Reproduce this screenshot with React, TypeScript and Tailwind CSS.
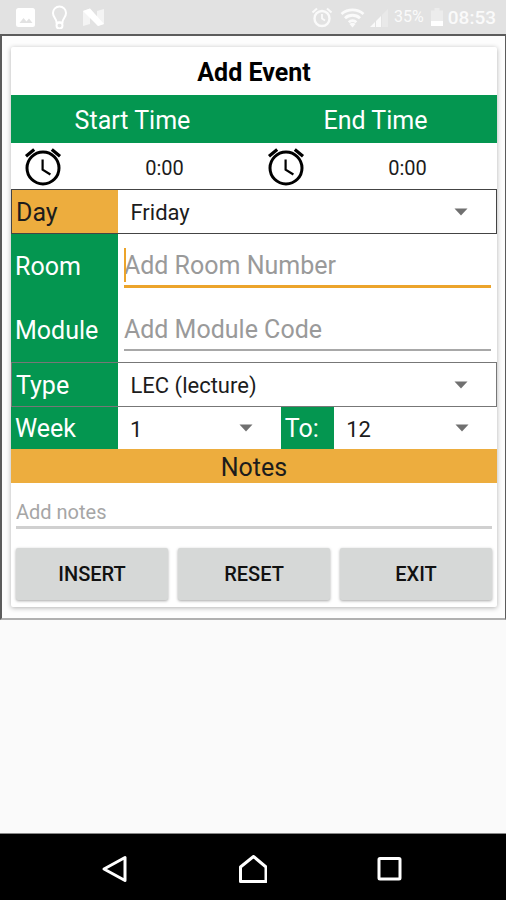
import React, { useState } from 'react'

const AlarmIcon = () => (
  <svg viewBox="0 0 40 40" className="h-10 w-10" fill="none" stroke="black" aria-hidden="true">
    <circle cx="20" cy="22" r="16" strokeWidth="3" />
    <path d="M19.6 13.5v10.2l7.8 4.8" strokeWidth="2.2" />
    <path d="M3 10.2l8.2-6.8M37 10.2L28.800 3.4" strokeWidth="3.2" />
  </svg>
)

const StatusBar = () => (
  <header className="flex h-[34px] items-center bg-[#e2e2e2] pl-4 pr-[10px] text-[#fafafa]">
    <svg viewBox="0 0 90 24" className="h-6 w-[90px]" aria-hidden="true">
      <rect x="0" y="3" width="19" height="19" rx="2.5" fill="#fff" />
      <path d="M3.5 18l4-5 3 3.5 2.5-3 3.5 4.5z" fill="#e2e2e2" />
      <path d="M40.5 17.5c0-4-3.5-5-3.500-9.500a6.5 6.5 0 0 1 13 0c0 4.5-3.500 5.5-3.500 9.500z" fill="none" stroke="#fff" strokeWidth="2" />
      <circle cx="43.5" cy="20.5" r="3" fill="none" stroke="#fff" strokeWidth="2" />
      <path d="M67 6l7-2.5 7 9V6l7-2v15l-6 2-8-10v8l-7 2z" fill="#f4f4f4" />
      <path d="M67 6l7-2.5L88 19l-6 2z" fill="#fff" />
    </svg>
    <div className="ml-auto flex items-center">
      <svg viewBox="0 0 80 24" className="h-6 w-20" fill="none" stroke="#fafafa" aria-hidden="true">
        <circle cx="12" cy="13.5" r="7.5" strokeWidth="2.4" />
        <path d="M12 9v4.5l3 2" strokeWidth="1.8" />
        <path d="M2.500 7.5l4.500-4M21.500 7.5l-4.500-4" strokeWidth="2" />
        <path d="M31.500 9a17 17 0 0 1 22 0M35 13.200a11 11 0 0 1 15 0M38.800 17.200a5.5 5.5 0 0 1 7.500 0" strokeWidth="2.8" />
        <path d="M42.500 22.500l-3-3.500a4.5 4.5 0 0 1 6 0z" fill="#fafafa" stroke="none" />
        <path d="M60 22l5-5v5zM66 22v-6l5-5v11z" fill="#fafafa" stroke="none" />
        <path d="M72 10l6-6v18h-6z" fill="#e9e9e9" stroke="none" />
      </svg>
      <span className="ml-1 text-base">35%</span>
      <svg viewBox="0 0 14 20" className="ml-[6px] h-5 w-[14px]" aria-hidden="true">
        <path d="M1 3.5h3.500V1h5v2.500H13V19H1z" fill="#ececec" />
        <path d="M1 14h12v5H1z" fill="#fff" />
      </svg>
      <span className="ml-1 pt-0.5 text-[19px] font-medium">08:53</span>
    </div>
  </header>
)

interface SpinnerProps {
  id: string
  value: string
  options: string[]
  onChange: (value: string) => void
}

const Spinner: React.FC<SpinnerProps> = ({ id, value, options, onChange }) => (
  <div className="relative flex min-w-0 flex-1">
    <select
      id={id}
      value={value}
      onChange={(e) => onChange(e.target.value)}
      className="w-full appearance-none bg-white px-3 pt-0.5 text-[22px] text-[#1c1c1c] outline-none"
    >
      {options.map((option) => (
        <option key={option}>{option}</option>
      ))}
    </select>
    <svg
      viewBox="0 0 14 8"
      className="pointer-events-none absolute right-7 top-1/2 h-2 w-[14px] -translate-y-1/2"
      aria-hidden="true"
    >
      <path d="M0.5 0.5h13L7 7.5z" fill="#707070" />
    </svg>
  </div>
)

const labelClass = "flex w-[22%] shrink-0 items-center bg-[#049650] pl-1 pt-0.5 text-[25px] text-white"
const buttonClass =
  "h-[52px] flex-1 rounded-xs bg-[#d6d8d7] text-xl font-medium text-[#111] shadow-[0_1px_3px_rgba(0,0,0,0.35)]"

const weeks = Array.from({ length: 12 }, (_, i) => String(i + 1))

export default function App() {
  const [day, setDay] = useState('Friday')
  const [room, setRoom] = useState('')
  const [moduleCode, setModuleCode] = useState('')
  const [type, setType] = useState('LEC (lecture)')
  const [fromWeek, setFromWeek] = useState('1')
  const [toWeek, setToWeek] = useState('12')
  const [notes, setNotes] = useState('')

  const reset = () => {
    setRoom('')
    setModuleCode('')
    setNotes('')
  }

  return (
    <div className="flex min-h-screen flex-col bg-[#fafafa] font-[Roboto,sans-serif]">
      <StatusBar />

      <main className="border-y-2 border-l-2 border-r border-[#5c5c5c] border-b-[#b0b0b0] bg-[#fdfdfd] px-2 pb-[11px] pt-[11px]">
        <form
          onSubmit={(e) => e.preventDefault()}
          className="ml-px rounded-xs bg-white shadow-[0_1px_5px_rgba(0,0,0,0.3)]"
        >
          <h1 className="flex h-12 items-center justify-center pt-1 text-[25px] font-bold text-black">Add Event</h1>

          <div className="grid h-12 grid-cols-2 items-center bg-[#049650] pt-1 text-center text-[25px] text-white">
            <span>Start Time</span>
            <span>End Time</span>
          </div>

          <div className="grid h-[46px] grid-cols-2">
            {['Start', 'End'].map((name) => (
              <div key={name} className="flex items-center">
                <button type="button" aria-label={`${name} time`} className="flex w-16 justify-center">
                  <AlarmIcon />
                </button>
                <output className="flex-1 pt-1 text-center text-xl text-[#1c1c1c]">0:00</output>
              </div>
            ))}
          </div>

          <div className="flex h-[45px] border border-[#444]">
            <label htmlFor="day" className="flex w-[22%] shrink-0 items-center bg-[#edad3e] pl-1 pt-0.5 text-[25px] text-[#1c1c1c]">
              Day
            </label>
            <Spinner
              id="day"
              value={day}
              options={['Monday', 'Tuesday', 'Wednesday', 'Thursday', 'Friday']}
              onChange={setDay}
            />
          </div>

          <div className="flex h-16">
            <label htmlFor="room" className={labelClass}>Room</label>
            <div className="relative flex-1 px-[6px] pt-3">
              <input
                id="room"
                value={room}
                onChange={(e) => setRoom(e.target.value)}
                placeholder="Add Room Number"
                className="h-[42px] w-full border-b-3 border-[#eca42b] text-[25px] caret-[#eca42b] outline-none placeholder:text-[#9a9a9a]"
              />
              {!room && <span className="absolute left-[6px] top-[14px] h-[34px] w-[2px] bg-[#eca42b]" />}
            </div>
          </div>

          <div className="flex h-16">
            <label htmlFor="module" className={labelClass}>Module</label>
            <div className="flex-1 px-[6px] pt-3">
              <input
                id="module"
                value={moduleCode}
                onChange={(e) => setModuleCode(e.target.value)}
                placeholder="Add Module Code"
                className="h-[41px] w-full border-b-2 border-[#a8a8a8] text-[25px] outline-none placeholder:text-[#9a9a9a]"
              />
            </div>
          </div>

          <div className="flex h-[45px] border border-[#777]">
            <label htmlFor="type" className={labelClass}>Type</label>
            <Spinner
              id="type"
              value={type}
              options={['LEC (lecture)', 'LAB (lab)', 'TUT (tutorial)']}
              onChange={setType}
            />
          </div>

          <div className="flex h-[42px]">
            <label htmlFor="from-week" className={labelClass}>Week</label>
            <Spinner id="from-week" value={fromWeek} options={weeks} onChange={setFromWeek} />
            <label htmlFor="to-week" className="flex w-[11%] shrink-0 items-center bg-[#049650] pl-1 pt-0.5 text-[25px] text-white">
              To:
            </label>
            <Spinner id="to-week" value={toWeek} options={weeks} onChange={setToWeek} />
          </div>

          <label htmlFor="notes" className="flex h-[34px] items-center justify-center bg-[#edad3e] pt-1 text-[25px] text-[#1c1c1c]">
            Notes
          </label>

          <div className="px-[5px] pt-3">
            <input
              id="notes"
              value={notes}
              onChange={(e) => setNotes(e.target.value)}
              placeholder="Add notes"
              className="h-[34px] w-full border-b-3 border-[#d0d0d0] pt-0.5 text-xl outline-none placeholder:text-[#a6a6a6]"
            />
          </div>

          <div className="flex gap-[10px] px-[5px] pb-[7px] pt-[19px]">
            <button type="submit" className={buttonClass}>INSERT</button>
            <button type="button" onClick={reset} className={buttonClass}>RESET</button>
            <button type="button" className={buttonClass}>EXIT</button>
          </div>
        </form>
      </main>

      <nav className="mt-auto flex h-[67px] items-center justify-center gap-[110px] border-t border-[#888] bg-black pt-1">
        <button type="button" aria-label="Back">
          <svg viewBox="0 0 28 28" className="h-7 w-7" fill="none" stroke="white" strokeWidth="3" strokeLinejoin="round">
            <path d="M24 2.500v23L3 14z" />
          </svg>
        </button>
        <button type="button" aria-label="Home">
          <svg viewBox="0 0 28 28" className="h-7 w-7" fill="none" stroke="white" strokeWidth="3" strokeLinejoin="round">
            <path d="M1.500 12L14.500 1.500 27 12v14.500H1.500z" />
          </svg>
        </button>
        <button type="button" aria-label="Recent apps">
          <svg viewBox="0 0 28 28" className="h-7 w-7" fill="none" stroke="white" strokeWidth="3">
            <rect x="2" y="3.500" width="21" height="20.500" rx="1" />
          </svg>
        </button>
      </nav>
    </div>
  )
}
